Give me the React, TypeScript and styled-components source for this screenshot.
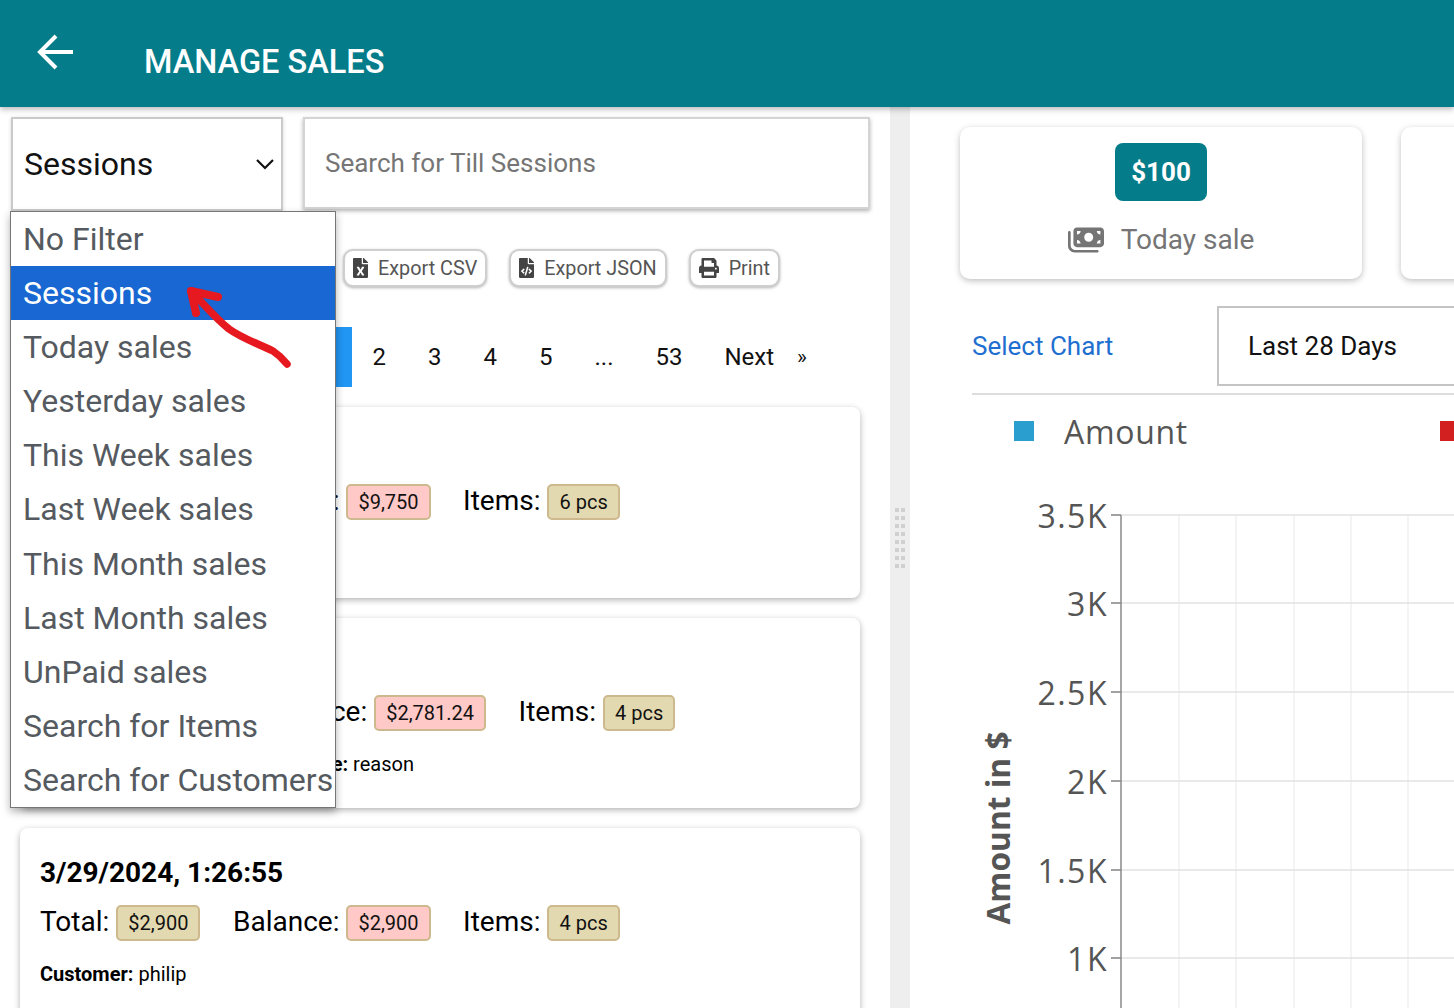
import React from 'react';
import styled, { createGlobalStyle } from 'styled-components';
import { FaFileExcel, FaFileCode, FaPrint } from 'react-icons/fa';
import { FaMoneyBills } from 'react-icons/fa6';

const TEAL = '#057c8a';

const GlobalStyle = createGlobalStyle`
  html, body {
    margin: 0;
    padding: 0;
    background: #fff;
    overflow: hidden;
    font-family: Roboto, "Liberation Sans", sans-serif;
  }
  * {
    box-sizing: border-box;
  }
`;

const Page = styled.div`
  position: relative;
  width: 1454px;
  height: 1008px;
  overflow: hidden;
  display: flex;
  flex-direction: column;
`;

const Header = styled.header`
  position: relative;
  z-index: 3;
  flex: none;
  height: 107px;
  background: ${TEAL};
  box-shadow: 0 2px 6px rgba(0, 0, 0, 0.3);
  display: flex;
  align-items: center;
  padding-left: 35px;
`;

const BackIcon = styled.svg`
  width: 42px;
  height: 42px;
  margin-bottom: 3px;
`;

const Title = styled.h1`
  margin: 16px 0 0 67px;
  font-size: 32.5px;
  font-weight: 500;
  color: #fff;
`;

const Body = styled.div`
  flex: 1;
  display: flex;
  min-height: 0;
`;

const LeftPane = styled.section`
  position: relative;
  width: 890px;
  flex: none;
  overflow: hidden;
`;

const Splitter = styled.div`
  width: 20px;
  flex: none;
  background: #eeeeee;
  display: flex;
  align-items: flex-start;
  justify-content: center;
  padding-top: 401px;
`;

const Grip = styled.div`
  width: 10px;
  height: 60px;
  background-image: linear-gradient(#d0d0d0 50%, transparent 50%), linear-gradient(#d0d0d0 50%, transparent 50%);
  background-size: 4px 8px;
  background-position: 0 0, 6px 0;
  background-repeat: repeat-y;
`;

const RightPane = styled.section`
  flex: 1;
  min-width: 0;
  overflow: hidden;
  padding-top: 20px;
`;

const FilterBar = styled.div`
  display: flex;
  gap: 20px;
  padding: 10px 0 0 11px;
  align-items: flex-start;
`;

const SelectBox = styled.div`
  width: 272px;
  height: 94px;
  border: 2px solid #cacaca;
  box-shadow: 0 1px 4px rgba(0, 0, 0, 0.15);
  display: flex;
  align-items: center;
  justify-content: space-between;
  padding: 0 3px 0 11px;
  font-size: 32px;
  color: #111;
  background: #fff;
`;

const SearchInput = styled.input`
  width: 567px;
  height: 92px;
  border: 2px solid #d4d4d4;
  box-shadow: 0 2px 4px rgba(0, 0, 0, 0.3);
  padding: 0 20px;
  font-family: Roboto, sans-serif;
  font-size: 26px;
  outline: none;
  &::placeholder {
    color: #757575;
    opacity: 1;
  }
`;

const Dropdown = styled.ul`
  position: absolute;
  z-index: 2;
  top: 104px;
  left: 10px;
  width: 326px;
  margin: 0;
  padding: 0;
  list-style: none;
  background: #fff;
  border: 1px solid #767676;
  box-shadow: 0 4px 8px rgba(0, 0, 0, 0.3);
`;

const Option = styled.li<{ $selected?: boolean }>`
  height: 54.1px;
  line-height: 54px;
  padding-left: 12px;
  font-size: 32px;
  white-space: nowrap;
  color: ${props => (props.$selected ? '#fff' : '#555a60')};
  background: ${props => (props.$selected ? '#1967d2' : 'transparent')};
`;

const Arrow = styled.svg`
  position: absolute;
  z-index: 4;
  left: 180px;
  top: 175px;
  width: 120px;
  height: 100px;
`;

const ExportRow = styled.div`
  display: flex;
  gap: 22px;
  margin-top: 38px;
  padding-left: 343px;
`;

const ExportButton = styled.button`
  height: 38px;
  display: flex;
  align-items: center;
  gap: 10px;
  padding: 0 8px;
  background: #fff;
  border: 2px solid #cfcfcf;
  border-radius: 10px;
  box-shadow: 0 1px 3px rgba(0, 0, 0, 0.3);
  font-family: Roboto, sans-serif;
  font-size: 19.8px;
  color: #555;
  svg {
    color: #444;
    width: 15px;
    height: 20px;
    flex: none;
  }
`;

const PrintButton = styled(ExportButton)`
  svg {
    width: 20px;
  }
`;

const Pagination = styled.nav`
  display: flex;
  align-items: center;
  height: 60px;
  margin-top: 40px;
  padding-left: 296px;
`;

const PageLink = styled.a<{ $active?: boolean }>`
  height: 60px;
  line-height: 60px;
  padding: 0 21px;
  font-size: 24px;
  color: ${props => (props.$active ? '#fff' : '#111')};
  background: ${props => (props.$active ? '#2196f3' : 'transparent')};
`;

const NextLink = styled(PageLink)`
  display: flex;
  align-items: center;
  gap: 23px;
  span {
    font-size: 21px;
  }
`;

const CardList = styled.div`
  display: flex;
  flex-direction: column;
  gap: 20px;
  margin: 20px 0 0 20px;
  width: 840px;
`;

const SaleCard = styled.article`
  height: 190.5px;
  flex: none;
  padding: 28px 20px 0;
  background: #fff;
  border-radius: 8px;
  box-shadow: 0 2px 6px rgba(0, 0, 0, 0.3);
`;

const SaleDate = styled.div`
  font-size: 28px;
  font-weight: 700;
  line-height: 34px;
  color: #000;
`;

const TotalsRow = styled.div`
  display: flex;
  gap: 32.5px;
  margin-top: 12px;
`;

const Total = styled.div`
  display: flex;
  align-items: center;
  gap: 7px;
  font-size: 28px;
  color: #000;
`;

const Tag = styled.span<{ $pink?: boolean }>`
  height: 36px;
  line-height: 32px;
  margin-top: 3px;
  padding: 0 10px;
  font-size: 20px;
  color: #111;
  background: ${props => (props.$pink ? '#ffc9c7' : '#e3d9b0')};
  border: 2px solid #cdb98d;
  border-radius: 5px;
`;

const Meta = styled.div`
  display: flex;
  gap: 113px;
  margin-top: 19px;
  font-size: 20px;
  line-height: 28px;
  color: #000;
  b {
    font-weight: 700;
  }
`;

const StatRow = styled.div`
  display: flex;
  gap: 39px;
  padding-left: 50px;
`;

const StatCard = styled.div`
  width: 402px;
  height: 152px;
  flex: none;
  background: #fff;
  border-radius: 10px;
  box-shadow: 0 2px 6px rgba(0, 0, 0, 0.25);
  display: flex;
  flex-direction: column;
  align-items: center;
  padding-top: 16px;
`;

const StatBadge = styled.div`
  width: 92px;
  height: 58px;
  line-height: 59px;
  text-align: center;
  border-radius: 8px;
  background: ${TEAL};
  color: #fff;
  font-size: 26px;
  font-weight: 700;
`;

const StatLabel = styled.div`
  display: flex;
  align-items: center;
  gap: 17px;
  margin-top: 21px;
  font-size: 28px;
  line-height: 36px;
  color: #757575;
  svg {
    font-size: 36px;
  }
`;

const ChartHeader = styled.div`
  display: flex;
  align-items: center;
  height: 89px;
  margin: 27px 0 0 62px;
  border-bottom: 2px solid #ddd;
  padding-bottom: 7px;
`;

const ChartLabel = styled.div`
  width: 245px;
  flex: none;
  font-size: 26px;
  color: #1f6fd0;
`;

const RangeSelect = styled.div`
  width: 320px;
  height: 80px;
  flex: none;
  line-height: 76px;
  padding-left: 29px;
  border: 2px solid #c4c4c4;
  font-size: 26px;
  color: #111;
`;

const Legend = styled.div`
  display: flex;
  align-items: center;
  height: 40px;
  margin-top: 16px;
  padding-left: 104px;
`;

const LegendItem = styled.div`
  width: 426px;
  flex: none;
  display: flex;
  align-items: center;
  gap: 30px;
  font-family: "Open Sans", sans-serif;
  font-size: 32px;
  letter-spacing: 0.7px;
  color: #555;
`;

const LegendSwatch = styled.span<{ $color: string }>`
  width: 20px;
  height: 20px;
  flex: none;
  background: ${props => props.$color};
`;

const ChartSvg = styled.svg`
  display: block;
  width: 544px;
  height: 548px;
  margin-top: 9px;
  text {
    font-family: "Open Sans", sans-serif;
    fill: #555;
  }
`;

const FILTERS = [
  'No Filter',
  'Sessions',
  'Today sales',
  'Yesterday sales',
  'This Week sales',
  'Last Week sales',
  'This Month sales',
  'Last Month sales',
  'UnPaid sales',
  'Search for Items',
  'Search for Customers',
];

const SALES = [
  { date: '3/29/2024, 2:10:41', total: '$9,750', balance: '$9,750', items: '6 pcs', meta: [['Customer:', 'philip']] },
  { date: '3/29/2024, 1:48:12', total: '$2,781.24', balance: '$2,781.24', items: '4 pcs', meta: [['Customer:', 'philip'], ['Note:', 'reason']] },
  { date: '3/29/2024, 1:26:55', total: '$2,900', balance: '$2,900', items: '4 pcs', meta: [['Customer:', 'philip']] },
];

const TICKS = [
  { label: '3.5K', y: 55 },
  { label: '3K', y: 143 },
  { label: '2.5K', y: 232 },
  { label: '2K', y: 321 },
  { label: '1.5K', y: 410 },
  { label: '1K', y: 498 },
];

const GRID_X = [269, 326, 384, 441, 498];

export default function App() {
  return (
    <Page>
      <GlobalStyle />
      <Header>
        <BackIcon viewBox="0 0 42 42" fill="none" stroke="#fff" strokeWidth="4">
          <path d="M38 21H5M21 5L5 21l16 16" />
        </BackIcon>
        <Title>MANAGE SALES</Title>
      </Header>
      <Body>
        <LeftPane>
          <FilterBar>
            <SelectBox>
              Sessions
              <svg width="26" height="26" viewBox="0 0 26 26" fill="none" stroke="#111" strokeWidth="2.2">
                <path d="M5 9l8 8 8-8" />
              </svg>
            </SelectBox>
            <SearchInput placeholder="Search for Till Sessions" />
          </FilterBar>
          <Dropdown>
            {FILTERS.map(f => (
              <Option key={f} $selected={f === 'Sessions'}>{f}</Option>
            ))}
          </Dropdown>
          <Arrow viewBox="0 0 120 100" fill="none" stroke="#e5191f" strokeWidth="7.5" strokeLinecap="round" strokeLinejoin="round">
            <path d="M11 9c12 12 24 27 38 38 14 10 30 15 44 22 6 4 10 8 14 13" />
            <path d="M11 9l27 6M11 9l5 22" strokeWidth="8" />
          </Arrow>
          <ExportRow>
            <ExportButton><FaFileExcel />Export CSV</ExportButton>
            <ExportButton><FaFileCode />Export JSON</ExportButton>
            <PrintButton><FaPrint />Print</PrintButton>
          </ExportRow>
          <Pagination>
            <PageLink $active>1</PageLink>
            <PageLink>2</PageLink>
            <PageLink>3</PageLink>
            <PageLink>4</PageLink>
            <PageLink>5</PageLink>
            <PageLink>...</PageLink>
            <PageLink>53</PageLink>
            <NextLink>Next<span>»</span></NextLink>
          </Pagination>
          <CardList>
            {SALES.map(sale => (
              <SaleCard key={sale.date}>
                <SaleDate>{sale.date}</SaleDate>
                <TotalsRow>
                  <Total>Total: <Tag>{sale.total}</Tag></Total>
                  <Total>Balance: <Tag $pink>{sale.balance}</Tag></Total>
                  <Total>Items: <Tag>{sale.items}</Tag></Total>
                </TotalsRow>
                <Meta>
                  {sale.meta.map(([k, v]) => (
                    <span key={k}><b>{k}</b> {v}</span>
                  ))}
                </Meta>
              </SaleCard>
            ))}
          </CardList>
        </LeftPane>
        <Splitter><Grip /></Splitter>
        <RightPane>
          <StatRow>
            <StatCard>
              <StatBadge>$100</StatBadge>
              <StatLabel><FaMoneyBills />Today sale</StatLabel>
            </StatCard>
            <StatCard />
          </StatRow>
          <ChartHeader>
            <ChartLabel>Select Chart</ChartLabel>
            <RangeSelect>Last 28 Days</RangeSelect>
          </ChartHeader>
          <Legend>
            <LegendItem><LegendSwatch $color="#2a9fcf" />Amount</LegendItem>
            <LegendSwatch $color="#d21f1f" />
          </Legend>
          <ChartSvg viewBox="0 0 544 548">
            {GRID_X.map(x => (
              <line key={x} x1={x} y1={55} x2={x} y2={548} stroke="#f0f0f0" strokeWidth="1.5" />
            ))}
            {TICKS.map(t => (
              <g key={t.label}>
                <line x1={201} y1={t.y} x2={544} y2={t.y} stroke="#e2e2e2" strokeWidth="1.5" />
                <line x1={201} y1={t.y} x2={211} y2={t.y} stroke="#888" strokeWidth="1.5" />
                <text x={198} y={t.y + 13} textAnchor="end" fontSize="32" letterSpacing="1.5">{t.label}</text>
              </g>
            ))}
            <line x1={211} y1={55} x2={211} y2={548} stroke="#888" strokeWidth="1.5" />
            <text transform="translate(100 368) rotate(-90)" fontSize="31.7" fontWeight="700" textAnchor="middle">Amount in $</text>
          </ChartSvg>
        </RightPane>
      </Body>
    </Page>
  );
}
